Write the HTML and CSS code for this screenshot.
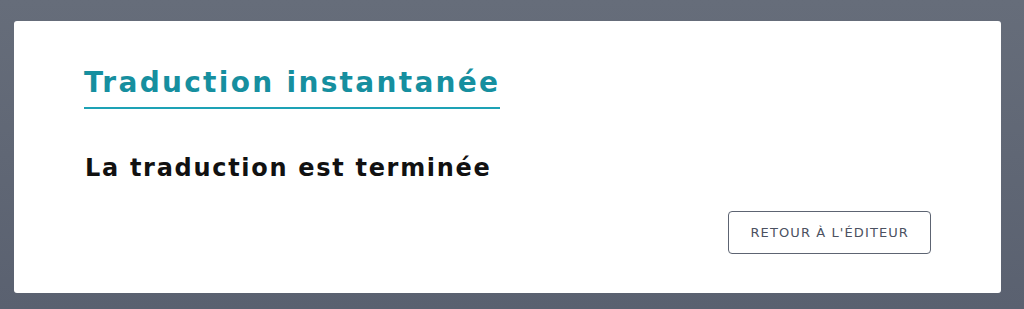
FILE: index.html
```html
<!DOCTYPE html>
<html lang="fr">
<head>
    <meta charset="UTF-8">
    <meta name="viewport" content="width=device-width, initial-scale=1.0">
    <title>Traduction instantanée</title>
    <link rel="stylesheet" href="styles.css">
</head>
<body>

    <!-- Translation done dialog -->
    <div class="modal">
        <div class="modal-head">
            <h2 class="modal-title">Traduction instantanée</h2>
        </div>
        <p class="modal-message">La traduction est terminée</p>
        <div class="modal-actions">
            <button class="btn-outline">Retour à l'éditeur</button>
        </div>
    </div>

</body>
</html>
```

FILE: styles.css
```css
html, body {
    height: 100%;
}
body {
    margin: 0;
    background: linear-gradient(180deg, #666d7a 0%, #5a6170 100%);
    font-family: "DejaVu Sans", Verdana, sans-serif;
    padding: 21px 23px 16px 14px;
    box-sizing: border-box;
}
.modal {
    background: #fff;
    border-radius: 3px;
    height: 272px;
    box-sizing: border-box;
    padding: 42px 70px 0 70px;
}
.modal-head {
    display: flex;
}
.modal-title {
    margin: 0;
    font-size: 28px;
    font-weight: bold;
    color: #168f9f;
    letter-spacing: 2.3px;
    line-height: 40px;
    padding-bottom: 4px;
    border-bottom: 2px solid #1da2b5;
}
.modal-message {
    margin: 44px 0 0 1px;
    font-size: 24px;
    font-weight: bold;
    color: #111;
    letter-spacing: 1.7px;
    line-height: 30px;
}
.modal-actions {
    display: flex;
    justify-content: flex-end;
    margin-top: 28px;
}
.btn-outline {
    background: #fff;
    border: 1px solid #5d6472;
    border-radius: 4px;
    height: 43px;
    padding: 0 21px;
    font-family: "DejaVu Sans", Verdana, sans-serif;
    font-size: 13px;
    letter-spacing: 1.1px;
    color: #4b5161;
    text-transform: uppercase;
    cursor: pointer;
}
```
